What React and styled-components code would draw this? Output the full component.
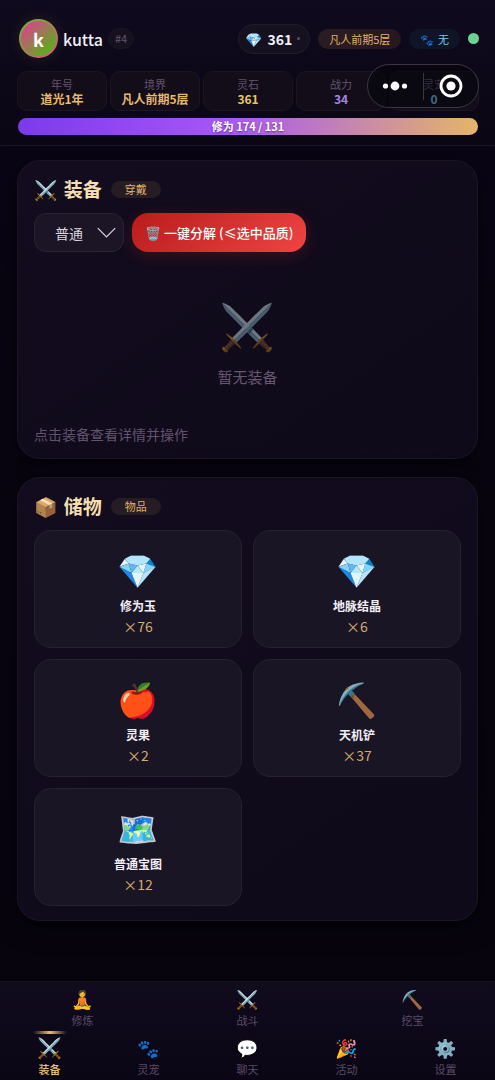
import React from "react";
import styled, { createGlobalStyle } from "styled-components";

const Global = createGlobalStyle`
  * { box-sizing: border-box; }
  body {
    margin: 0;
    background: #06030d;
    color: #f2eef6;
    font-family: "Noto Sans CJK SC", "Noto Color Emoji", sans-serif;
    font-size: 14px;
  }
  button, select { font-family: inherit; }
`;

const Page = styled.div`
  min-height: 100vh;
  display: flex;
  flex-direction: column;
  background: linear-gradient(180deg, #0a0518 0%, #08050f 50%, #06030d 100%);
`;

const Header = styled.header`
  position: relative;
  padding: 19px 16px 10px 17px;
  border-bottom: 1px solid #1b1622;
  background: linear-gradient(180deg, #0f0a1e, #0a0613);
`;

const UserRow = styled.div`
  display: flex;
  align-items: center;
  height: 39px;
  padding: 0 0 0 2px;
`;

const Avatar = styled.div`
  width: 39px;
  height: 39px;
  border-radius: 50%;
  border: 2px solid transparent;
  background:
    linear-gradient(135deg, #e0408f 10%, #4fb80f 90%) padding-box,
    linear-gradient(135deg, #5cc02c, #e05080) border-box;
  box-shadow: 0 0 16px rgba(229, 180, 100, 0.12);
  display: flex;
  align-items: center;
  justify-content: center;
  font-size: 18px;
  font-weight: 700;
  color: #fff;
`;

const UserName = styled.span`
  margin-left: 5px;
  font-size: 16px;
  font-weight: 500;
`;

const UserId = styled.span`
  margin-left: 5px;
  padding: 0 6px;
  height: 21px;
  line-height: 19px;
  border: 1px solid #1b1624;
  border-radius: 11px;
  background: #17111f;
  color: #63536f;
  font-size: 11px;
`;

const Status = styled.div`
  display: flex;
  align-items: center;
  gap: 8px;
  margin-left: auto;
`;

const Currency = styled.button`
  display: flex;
  align-items: center;
  gap: 5px;
  height: 30px;
  padding: 0 9px 0 6px;
  border: 1px solid #211c2c;
  border-radius: 15px;
  background: #15111f;
  color: #f2eef6;
  font-size: 14px;
  font-weight: 700;
`;

const Gem = styled.span`
  font-size: 14px;
`;

const Dot = styled.span`
  width: 3px;
  height: 3px;
  border-radius: 50%;
  background: #5b5068;
`;

const Pill = styled.span`
  display: flex;
  align-items: center;
  gap: 4px;
  height: 20px;
  padding: 0 11px;
  border-radius: 10px;
  font-size: 11px;
  color: ${(p) => (p.$tone === "blue" ? "#7cc4ee" : "#e0b068")};
  background: ${(p) => (p.$tone === "blue" ? "#101427" : "linear-gradient(90deg, #291d23, #27171f)")};
`;

const Online = styled.span`
  width: 11px;
  height: 11px;
  border-radius: 50%;
  background: #6bd294;
`;

const Stats = styled.dl`
  display: grid;
  grid-template-columns: repeat(5, 1fr);
  gap: 3px;
  margin: 13px 0 7px;
`;

const Stat = styled.div`
  height: 40px;
  padding: 5px 0 0;
  border: 1px solid #1a1521;
  border-radius: 10px;
  background: #120d19;
  text-align: center;
`;

const StatLabel = styled.dt`
  font-size: 11px;
  line-height: 15px;
  color: #63536f;
`;

const StatValue = styled.dd`
  margin: 0;
  font-size: 12px;
  line-height: 14px;
  font-weight: 700;
  color: ${(p) => p.$color};
`;

const Progress = styled.div`
  height: 17px;
  margin: 0 1px;
  border-radius: 9px;
  background: linear-gradient(90deg, #7c3aed 0%, #a855f7 45%, #e5b567 100%);
  font-size: 11px;
  line-height: 17px;
  font-weight: 700;
  text-align: center;
  text-shadow: 0 1px 2px rgba(0, 0, 0, 0.5);
  color: #fff;
`;

const Capsule = styled.div`
  position: absolute;
  top: 64px;
  right: 16px;
  width: 112px;
  height: 44px;
  display: flex;
  align-items: center;
  border: 1px solid #3a373f;
  border-radius: 22px;
  background: rgba(3, 2, 6, 0.45);
`;

const CapsuleButton = styled.button`
  flex: 1;
  height: 27px;
  padding: 0;
  border: 0;
  border-left: ${(p) => (p.$divided ? "1px solid #3a373f" : "0")};
  background: none;
  display: flex;
  align-items: center;
  justify-content: center;
`;

const Main = styled.main`
  flex: 1;
  display: flex;
  flex-direction: column;
  gap: 18px;
  padding: 14px 17px 60px;
`;

const Panel = styled.section`
  padding: 16px 16px 14px;
  border: 1px solid #1b1624;
  border-radius: 23px;
  background: linear-gradient(145deg, #120c1e, #0f0a1a);
  box-shadow: 0 6px 24px rgba(0, 0, 0, 0.6);
`;

const PanelHead = styled.div`
  display: flex;
  align-items: center;
  gap: 9px;
  height: 24px;
`;

const Title = styled.h2`
  display: flex;
  gap: 6px;
  margin: 0;
  font-size: 19px;
  line-height: 24px;
  font-weight: 700;
  color: #f5dfae;
`;

const Tag = styled.span`
  height: 17px;
  padding: 0 14px;
  border-radius: 9px;
  background: #261c23;
  color: #e0b068;
  font-size: 11px;
  line-height: 17px;
`;

const Toolbar = styled.div`
  display: flex;
  gap: 8px;
  margin-top: 12px;
`;

const SelectBox = styled.div`
  position: relative;
  width: 90px;
  height: 39px;

  svg {
    position: absolute;
    right: 8px;
    top: 14px;
    pointer-events: none;
  }
`;

const Select = styled.select`
  width: 100%;
  height: 100%;
  padding: 0 0 0 20px;
  border: 1px solid #282231;
  border-radius: 12px;
  background: #1b1525;
  color: #d9d4de;
  font-size: 14px;
  appearance: none;
`;

const DangerButton = styled.button`
  height: 39px;
  padding: 0 13px;
  border: 0;
  border-radius: 16px;
  background: linear-gradient(135deg, #b91c1c, #ef4444);
  box-shadow: 0 4px 16px rgba(220, 38, 38, 0.2);
  color: #fff;
  font-size: 13px;
  font-weight: 500;
  white-space: nowrap;
`;

const Empty = styled.div`
  display: flex;
  flex-direction: column;
  align-items: center;
  padding: 36px 0;
  color: #66566f;
  font-size: 15px;
  line-height: 22px;
`;

const EmptyIcon = styled.div`
  font-size: 45px;
  line-height: 72px;
  margin-bottom: 6px;
  opacity: 0.5;
`;

const Hint = styled.p`
  margin: 0;
  font-size: 14px;
  line-height: 20px;
  color: #62526e;
`;

const ItemGrid = styled.div`
  display: grid;
  grid-template-columns: 1fr 1fr;
  gap: 11px;
  margin-top: 12px;
`;

const Item = styled.button`
  height: 118px;
  padding: 0;
  display: flex;
  flex-direction: column;
  align-items: center;
  border: 1px solid #262030;
  border-radius: 17px;
  background: #1a1524;
  color: #f2eef6;
`;

const ItemIcon = styled.span`
  margin: 15px 0 3px;
  font-size: 33px;
  line-height: 46px;
`;

const ItemName = styled.span`
  font-size: 12px;
  line-height: 22px;
  font-weight: 700;
`;

const ItemCount = styled.span`
  font-size: 14px;
  line-height: 18px;
  color: #d6aa68;
`;

const Nav = styled.nav`
  position: sticky;
  bottom: 0;
  border-top: 1px solid #17121e;
  background: linear-gradient(180deg, #110b1e, #0a0614);
`;

const NavRow = styled.div`
  display: flex;
  height: ${(p) => p.$height};
`;

const NavItem = styled.a`
  position: relative;
  flex: 1;
  display: flex;
  flex-direction: column;
  align-items: center;
  padding-top: 3px;
  text-decoration: none;
  font-size: 11px;
  line-height: 16px;
  font-weight: ${(p) => (p.$active ? 500 : 400)};
  color: ${(p) => (p.$active ? "#e9c27c" : "#5b4b68")};

  &::before {
    content: "";
    display: ${(p) => (p.$active ? "block" : "none")};
    position: absolute;
    top: 0;
    width: 34px;
    height: 3px;
    background: linear-gradient(90deg, transparent, #e5bd7c, transparent);
  }
`;

const NavIcon = styled.span`
  margin-bottom: 1px;
  font-size: ${(p) => (p.$active ? "20px" : "18px")};
  line-height: 26px;
`;

const stats = [
  ["年号", "道光1年", "#e9b96a"],
  ["境界", "凡人前期5层", "#e9b96a"],
  ["灵石", "361", "#e6c465"],
  ["战力", "34", "#a982e0"],
  ["灵宠", "0", "#6cc0e8"],
];

const items = [
  ["💎", "修为玉", 76],
  ["💎", "地脉结晶", 6],
  ["🍎", "灵果", 2],
  ["⛏️", "天机铲", 37],
  ["🗺️", "普通宝图", 12],
];

const topNav = [["🧘", "修炼"], ["⚔️", "战斗"], ["⛏️", "挖宝"]];
const bottomNav = [["⚔️", "装备"], ["🐾", "灵宠"], ["💬", "聊天"], ["🎉", "活动"], ["⚙️", "设置"]];

const NavLinks = ({ list, active, height }) => (
  <NavRow $height={height}>
    {list.map(([icon, label]) => (
      <NavItem href="#" key={label} $active={label === active}>
        <NavIcon $active={label === active}>{icon}</NavIcon>
        {label}
      </NavItem>
    ))}
  </NavRow>
);

export default function App() {
  return (
    <Page>
      <Global />
      <Header>
        <UserRow>
          <Avatar>k</Avatar>
          <UserName>kutta</UserName>
          <UserId>#4</UserId>
          <Status>
            <Currency><Gem>💎</Gem>361<Dot /></Currency>
            <Pill>凡人前期5层</Pill>
            <Pill $tone="blue"><span>🐾</span>无</Pill>
            <Online />
          </Status>
        </UserRow>
        <Stats>
          {stats.map(([label, value, color]) => (
            <Stat key={label}>
              <StatLabel>{label}</StatLabel>
              <StatValue $color={color}>{value}</StatValue>
            </Stat>
          ))}
        </Stats>
        <Progress>修为 174 / 131</Progress>
        <Capsule>
          <CapsuleButton aria-label="更多">
            <svg width="26" height="10" viewBox="0 0 26 10" fill="#fff">
              <circle cx="3.5" cy="5" r="2.6" />
              <circle cx="13" cy="5" r="4.4" />
              <circle cx="22.5" cy="5" r="2.6" />
            </svg>
          </CapsuleButton>
          <CapsuleButton $divided aria-label="关闭">
            <svg width="24" height="24" viewBox="0 0 24 24">
              <circle cx="12" cy="12" r="10" fill="none" stroke="#fff" strokeWidth="2.8" />
              <circle cx="12" cy="12" r="4.6" fill="#fff" />
            </svg>
          </CapsuleButton>
        </Capsule>
      </Header>

      <Main>
        <Panel>
          <PanelHead>
            <Title><span>⚔️</span>装备</Title>
            <Tag>穿戴</Tag>
          </PanelHead>
          <Toolbar>
            <SelectBox>
              <Select aria-label="品质" defaultValue="普通">
                <option>普通</option>
              </Select>
              <svg width="19" height="12" viewBox="0 0 19 12" fill="none" stroke="#d9d4de" strokeWidth="1.2">
                <path d="M.8 1.2 9.5 10 18.2 1.2" />
              </svg>
            </SelectBox>
            <DangerButton>🗑️ 一键分解 (≤选中品质)</DangerButton>
          </Toolbar>
          <Empty>
            <EmptyIcon>⚔️</EmptyIcon>
            暂无装备
          </Empty>
          <Hint>点击装备查看详情并操作</Hint>
        </Panel>

        <Panel>
          <PanelHead>
            <Title><span>📦</span>储物</Title>
            <Tag>物品</Tag>
          </PanelHead>
          <ItemGrid>
            {items.map(([icon, name, count]) => (
              <Item key={name}>
                <ItemIcon>{icon}</ItemIcon>
                <ItemName>{name}</ItemName>
                <ItemCount>×{count}</ItemCount>
              </Item>
            ))}
          </ItemGrid>
        </Panel>
      </Main>

      <Nav>
        <NavLinks list={topNav} height="49px" />
        <NavLinks list={bottomNav} active="装备" height="50px" />
      </Nav>
    </Page>
  );
}
